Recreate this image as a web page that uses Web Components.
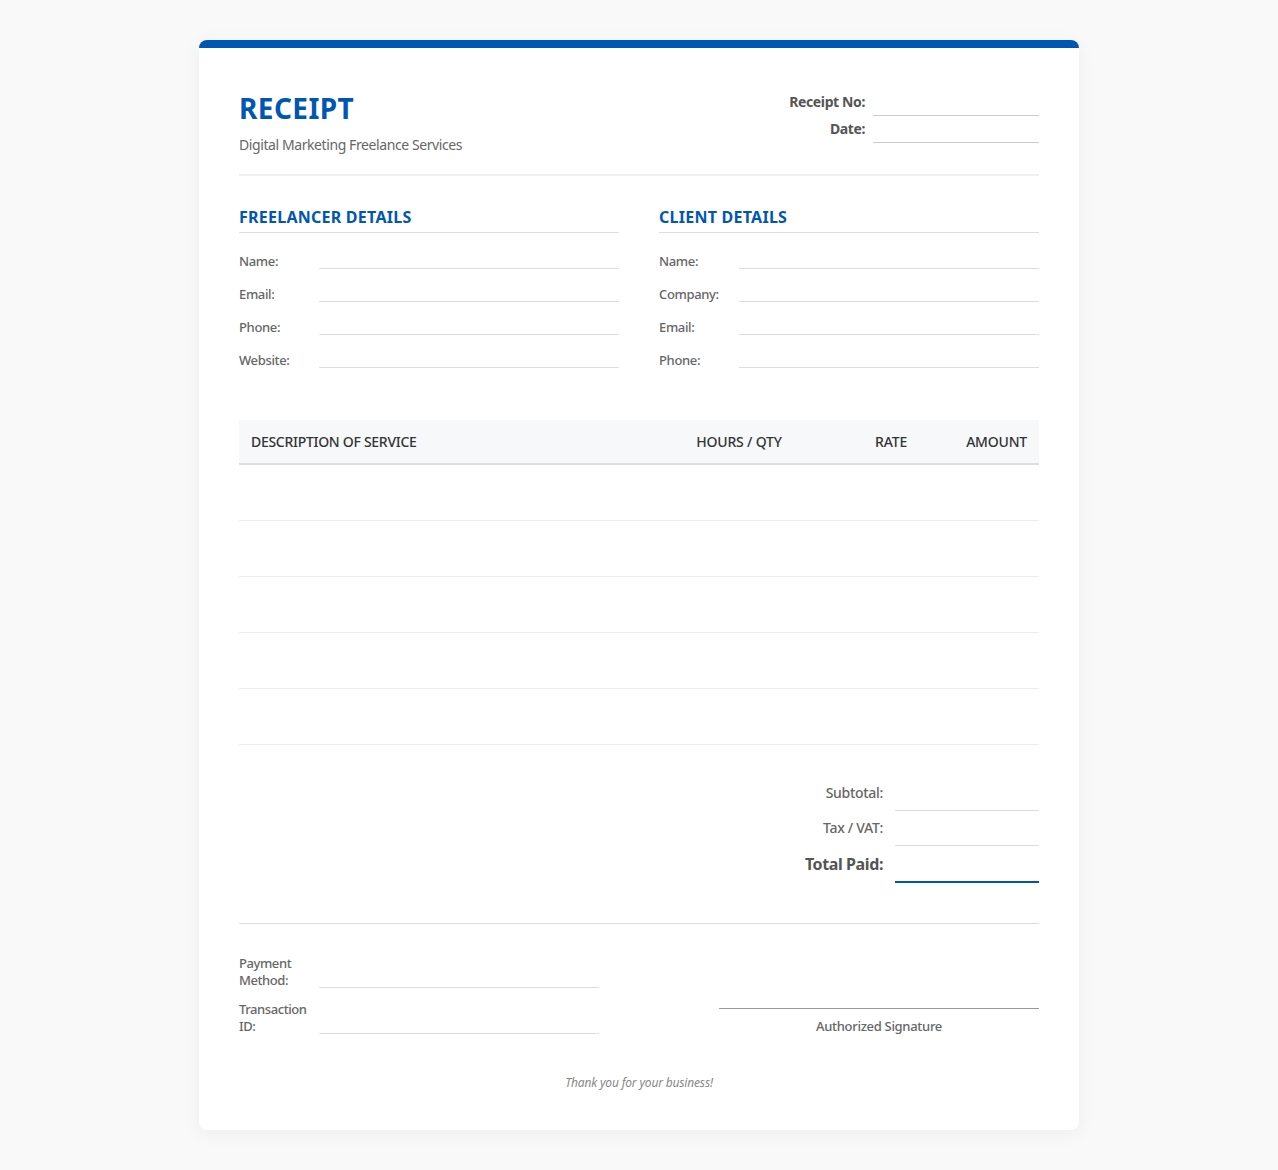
<!DOCTYPE html>
<html><head><meta charset="utf-8"><title>Receipt</title>
<style>
html,body{margin:0;padding:0}
body{background:#f9f9f9;font-family:"Noto Sans","Open Sans",sans-serif;color:#333}
</style></head><body>
<receipt-page>
  <receipt-header title-text="RECEIPT" subtitle="Digital Marketing Freelance Services"></receipt-header>
  <div slot="parties">
    <party-section heading="FREELANCER DETAILS" fields="Name:|Email:|Phone:|Website:"></party-section>
    <party-section heading="CLIENT DETAILS" fields="Name:|Company:|Email:|Phone:"></party-section>
  </div>
  <service-table slot="table"></service-table>
  <totals-box slot="totals"></totals-box>
  <receipt-footer slot="footer"></receipt-footer>
</receipt-page>
<script>
const FONT='"Noto Sans","Open Sans",sans-serif';
class Base extends HTMLElement{
  render(html){this.attachShadow({mode:'open'}).innerHTML=html;}
}
customElements.define('receipt-page',class extends Base{connectedCallback(){this.render(`<style>
:host{display:block;box-sizing:border-box;width:880px;margin:40px auto;background:#fff;border-top:8px solid #0056b3;border-radius:8px;padding:40px 40px 39px;box-shadow:0 4px 20px rgba(0,0,0,.05);font-family:${FONT}}
</style><slot></slot><slot name="parties"></slot><slot name="table"></slot><slot name="totals"></slot><slot name="footer"></slot>`);
const p=this.querySelector('[slot=parties]');p.style.cssText='display:grid;grid-template-columns:380px 380px;column-gap:40px;margin-top:32px';}});
customElements.define('receipt-header',class extends Base{connectedCallback(){this.render(`<style>
:host{display:flex;justify-content:space-between;align-items:flex-start;height:86px;border-bottom:2px solid #f0f0f0}
h1{margin:0;font-size:28px;line-height:40px;font-weight:700;color:#0056b3;letter-spacing:.42px}
p{margin:7px 0 0;font-size:14px;line-height:19px;color:#666;letter-spacing:-.41px}
.meta{display:grid;grid-template-columns:auto 166px;column-gap:8px;padding-top:1px}
.k{font-size:14px;font-weight:700;color:#555;text-align:right;line-height:25px;height:27px;letter-spacing:-.38px}
.v{height:27px;box-sizing:border-box;border-bottom:1px solid #ccc}
</style><div><h1>${this.getAttribute('title-text')}</h1><p>${this.getAttribute('subtitle')}</p></div>
<div class="meta"><div class="k">Receipt No:</div><div class="v"></div><div class="k">Date:</div><div class="v"></div></div>`);}});
customElements.define('party-section',class extends Base{connectedCallback(){
const rows=this.getAttribute('fields').split('|').map(f=>`<div class="r"><span>${f}</span><i></i></div>`).join('');
this.render(`<style>
:host{display:block}
h2{margin:0 0 19px;font-size:16px;line-height:18px;padding-bottom:6px;font-weight:700;color:#0056b3;letter-spacing:.25px;border-bottom:1px solid #ddd}
.r{display:flex;height:33px}
span{width:80px;font-size:13px;font-weight:500;color:#666;line-height:18px;letter-spacing:-.35px;flex:none}
i{flex:1;height:16px;border-bottom:1px solid #ddd}
</style><h2>${this.getAttribute('heading')}</h2>${rows}`);}});
customElements.define('service-table',class extends Base{connectedCallback(){
this.render(`<style>
:host{display:block;margin-top:36px}
table{width:100%;border-collapse:collapse;table-layout:fixed}
th{height:43px;padding:0 12px;background:#f6f8fa;border-bottom:2px solid #ddd;font-size:14px;font-weight:500;color:#333;text-align:left;letter-spacing:-.2px}
th.d{letter-spacing:-.29px}
td{height:55px;padding:0;border-bottom:1px solid #eee}
.h{text-align:center}.a{text-align:right}
</style><table><colgroup><col><col style="width:150px"><col style="width:105px"><col style="width:120px"></colgroup>
<thead><tr><th class="d">DESCRIPTION OF SERVICE</th><th class="h">HOURS / QTY</th><th class="a">RATE</th><th class="a">AMOUNT</th></tr></thead>
<tbody>${'<tr><td></td><td></td><td></td><td></td></tr>'.repeat(5)}</tbody></table>`);}});
customElements.define('totals-box',class extends Base{connectedCallback(){
this.render(`<style>
:host{display:block;margin-top:30px;padding-bottom:40px;border-bottom:1px solid #ddd}
.r{display:flex;justify-content:flex-end;gap:12px}
.k{font-size:14px;font-weight:500;color:#666;line-height:36px;letter-spacing:-.3px}
.v{width:144px;height:36px;box-sizing:border-box;border-bottom:1px solid #ddd}
.t .k{font-size:16px;font-weight:700;color:#555;line-height:37px;letter-spacing:-.4px}
.t .v{height:37px;border-bottom:2px solid #0056b3}
</style><div class="r"><div class="k">Subtotal:</div><div class="v"></div></div>
<div class="r" style="margin-top:-1px"><div class="k">Tax / VAT:</div><div class="v"></div></div>
<div class="r t"><div class="k">Total Paid:</div><div class="v"></div></div>`);}});
customElements.define('receipt-footer',class extends Base{connectedCallback(){
this.render(`<style>
:host{display:block;padding-top:31px}
.c{display:flex;justify-content:space-between;align-items:flex-end}
.pay{width:360px}
.r{display:flex;align-items:flex-end;margin-bottom:13px}
.r:last-child{margin-bottom:0}
.k{width:80px;flex:none;font-size:13px;font-weight:500;color:#666;line-height:17px;letter-spacing:-.42px;margin-bottom:-1px}
.v{flex:1;height:17px;box-sizing:border-box;border-bottom:1px solid #ddd}
.sig{width:320px;border-top:1px solid #999;text-align:center;font-size:13px;font-weight:500;color:#666;line-height:18px;padding-top:8px;margin-bottom:-1px;letter-spacing:-.3px}
.th{margin-top:41px;text-align:center;font-size:12px;font-style:italic;color:#888;line-height:16px;letter-spacing:-.17px}
</style><div class="c"><div class="pay"><div class="r"><div class="k">Payment Method:</div><div class="v"></div></div><div class="r"><div class="k">Transaction ID:</div><div class="v"></div></div></div>
<div class="sig">Authorized Signature</div></div><div class="th">Thank you for your business!</div>`);}});
</script></body></html>
